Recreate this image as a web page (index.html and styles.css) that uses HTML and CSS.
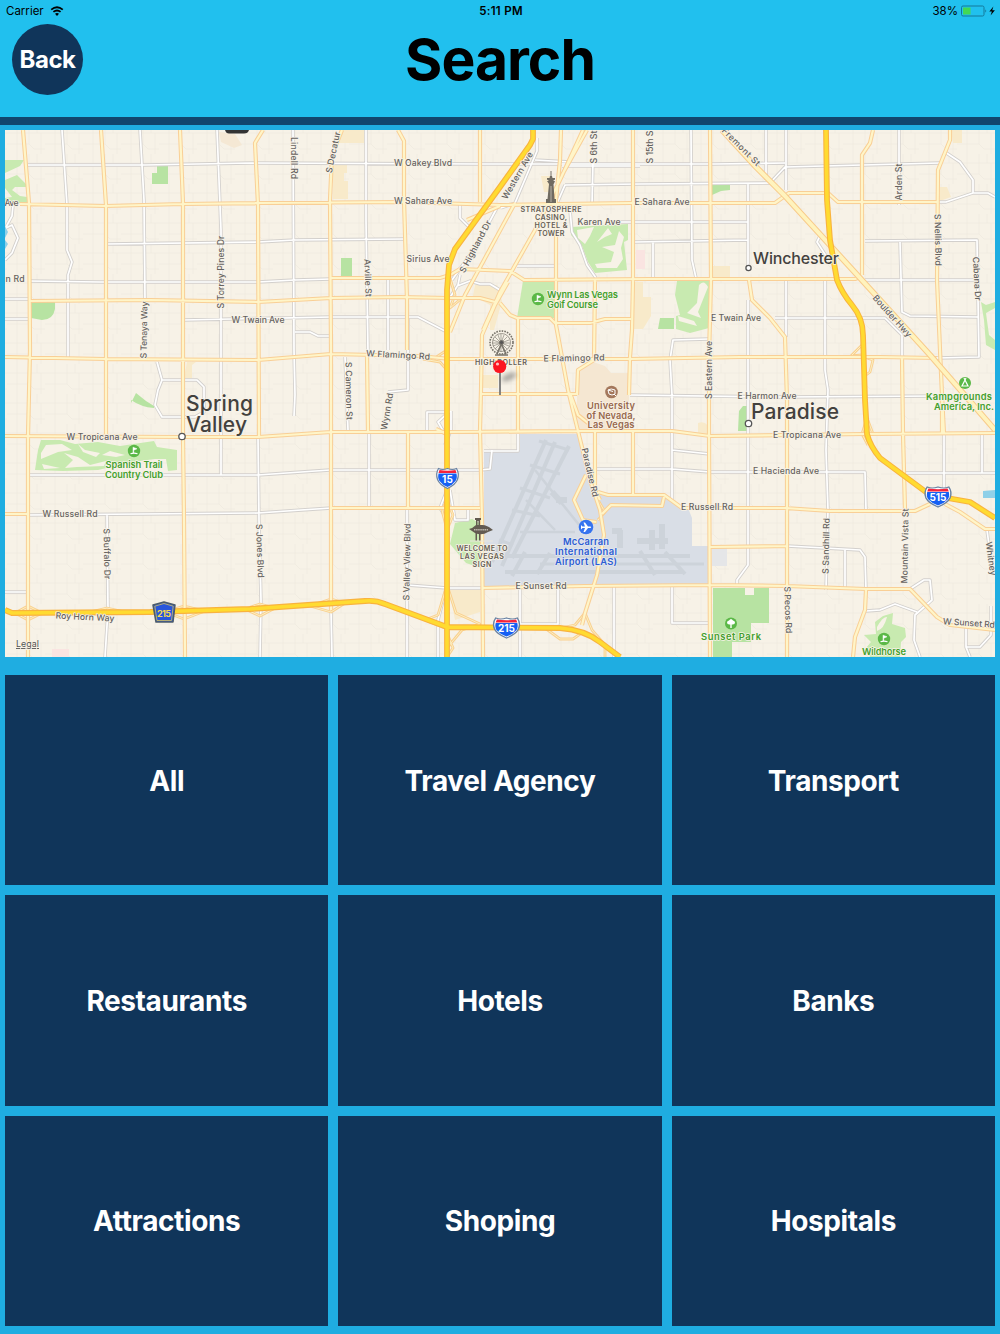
FILE: index.html
```html
<!DOCTYPE html>
<html lang="en">
<head>
  <meta charset="UTF-8">
  <meta name="viewport" content="width=device-width, initial-scale=1.0">
  <title>Search</title>
  <link rel="stylesheet" href="styles.css">
</head>
<body>
  <header>
    <div class="status-bar">
      <div class="carrier">
        <span>Carrier</span>
        <svg class="wifi" viewBox="0 0 14 10">
          <path d="M1.2 3.6Q7-1.2 12.8 3.6M3.4 5.9Q7 3 10.6 5.9" fill="none" stroke="#000" stroke-width="1.8"/>
          <path d="M5 7.7Q7 6.1 9 7.7L7 9.9Z"/>
        </svg>
      </div>
      <div class="time">5:11 PM</div>
      <div class="battery">
        <span>38%</span>
        <svg viewBox="0 0 35 12">
          <rect x=".5" y="1" width="22.5" height="10" rx="1.5" fill="none" stroke="#14789a"/>
          <rect x="2" y="2.5" width="7.5" height="7" fill="#43d853"/>
          <path d="M24.5 4.3Q26 6 24.5 7.7Z" fill="#14566f"/>
          <path d="M32.4 1.6L28.3 6.6H30.9L29.6 10.4L33.9 5.2H31.2Z"/>
        </svg>
      </div>
    </div>
    <div class="title-bar">
      <button class="back-btn">Back</button>
      <h1>Search</h1>
    </div>
  </header>

  <main>
    <svg class="map" viewBox="5 130 990 527">
      <defs>
        <path id="minor" d="M62 130L67 205V250L72 262L68 275V357 M140 130L144 200L145 300 M217 130L221 230V475 M293 130L294 350L295 395L294 416 M366 130V220L368 352
          M28 165H145L250 163L480 164L715 164L785 163 M106 244L258 242L295 240L405 239 M28 281L100 282H258L295 280L331 279 M5 299H30 M5 319H30 M183 320L331 317H418L445 331
          M388 277V350 M408 318V390L388 392 M295 332H310L318 336H331 M5 260L12 253L18 238L12 225L6 228 M13 205L12 216L6 227
          M535 160L570 162 M537 138V151L515 203L501 208 M562 166L640 166 M565 185L640 184L770 183L785 167L940 163 M565 185L555 208 M593 160L592 205 M691 130L692 260L696 278 M653 241V280
          M610 222H748 M635 242L748 240 M748 184V270 M766 130V180 M786 130V190 M899 130V205 M945 152L960 162L973 180V193 M937 202H946L973 193H988L995 197
          M865 241L977 240L979 357L937 358 M900 242L902 312L910 316L978 317 M865 280H978 M775 318H885L902 335V357 M786 280V337 M825 280V370L828 390L826 450L828 510L826 590 M830 262L817 242L820 236
          M709 339L673 340L670 360L672 395V500 M630 395L780 397L940 396 M28 475H258L330 470H480L490 469L492 450 M596 469H672L710 472H865L866 510 M672 450L710 454
          M748 300V565L737 580V586 M407 585L447 588H482 M157 362L162 380H197L204 387V412L195 417H162L155 405L158 390L162 380 M107 515L108 610L105 657 M345 357L348 430
          M28 515L258 513L331 508 M258 437L259 520L261 600L260 657 M331 610L332 657 M407 508V657 M369 432V508 M5 592H28 M787 546L825 548L860 550L865 557L866 590 M845 550V588
          M570 210L572 232L580 245L587 265L596 278 M517 266H556 M460 204V218L468 226 M457 286L470 281L480 284H490L500 290 M460 275L458 285L447 302 M498 206L477 245L452 280
          M520 588V657 M558 588V624H520 M614 586V657 M672 586V623H710 M910 589L924 580H930L932 600L915 615L914 640L920 657 M866 611L880 610L895 604L917 612
          M944 434V490 M902 473H995 M982 434V473 M966 626V647L970 657 M966 647H980L991 635V606 M987 530L991 560 M447 545V588 M427 432V412H445 M484 451H518V434
          M445 434L438 422L450 411 M447 490L440 508L450 524 M450 490L455 520L468 520V510 M438 657V620L447 585 M451 411V430L445 445"/>
        <path id="major" d="M23 130L29 203L30 350L28 436V657 M101 130L106 205V434 M180 130L183 203V436L184 520L185 657 M263 130L255 143L258 205L259 437 M342 130L332 155L330 200L331 350V610
          M398 130L404 141V200L407 300V350 M367 355L368 432 M408 432V508 M480 130V202 M583 130L560 180L535 230L500 292L483 330 M587 130L562 175 M515 203L465 295L450 332
          M561 130L560 160L556 200V325L568 390L578 431 M633 130V280L632 330L630 357L629 395 M710 130L711 280L709 357V430L710 657 M873 130L870 143L862 155V275 M950 130V140L938 170L937 280L940 350L942 395L944 434
          M20 204L105 206L183 204L259 203L400 202L500 205L560 204L630 203H775L789 193H828L838 202H937
          M30 301L150 300L258 302L331 298L400 297L450 298H480L495 302 M331 278H440L450 275L460 269L510 271L524 280L650 279H855L860 277
          M5 357L105 359L258 360L331 354L420 356L450 359H630L740 357H880L937 358
          M500 303L510 315L517 318H550L555 323H590L605 319H631 M595 280L594 360L578 370L577 395 M518 318V432 M482 394H577
          M5 436L183 437H258L331 432H447L578 431H672L710 436L865 434L995 433 M5 514H28 M331 508H480
          M598 492L608 495H664L682 508H785L830 511H915L930 504 M602 514L611 505L662 506L664 497 M710 547L787 546 M482 588L585 586L710 585L787 586L866 589H910L937 617L950 625L995 630
          M578 431L590 480L600 510L604 535L597 575L585 613L582 625 M595 431V490L600 500 M633 431V494 M586 475L574 500L583 520L596 522 M570 393L578 415L588 423
          M749 280L752 300L770 318L785 337L787 400V657 M866 590L865 610L855 637L853 657 M902 357L903 434L905 510 M945 504L960 512L985 529H995 M942 394V434
          M447 434L436 429 M508 282L495 305L482 335L481 390L480 430L482 520L483 657 M467 220L500 206"/>
        <path id="ramps" d="M90 612L107 608L125 612M15 613L28 606L42 613L28 620ZM165 612L184 606L205 611L184 619ZM245 609L260 604L275 608L260 616ZM310 606L331 599L345 603L331 612Z
          M447 585L438 615L425 620L445 628L453 648L447 657M447 585L456 613L480 624L462 630L447 648M447 500L442 510L447 530M447 500L453 515L447 530
          M585 613L575 625L560 628M585 613L592 630L605 645V657M545 628L560 639H573L583 632M865 342L851 356L862 355M867 358L873 360L870 372L866 375M862 434L867 418L873 434L862 434L868 445
          M449 275L455 295L450 308L462 298M447 350L435 358L423 355M447 370L440 362L423 359M598 500L605 512L598 520M583 521L597 522"/>
        <path id="freeway" d="M533 130V139L530 145L500 187L455 249L449 265L447 290V657 M826 130L827 200L830 240L837 280Q842 293 852 305Q863 318 863 335L865 400L867 434Q870 446 880 458L930 495L970 502L995 518
          M5 610L12 613L150 612L250 609L365 601Q376 600 385 604L447 627L560 628Q585 630 600 642L620 657"/>
        <path id="boulder" d="M722 130L755 166L785 196L860 278L930 355L995 430"/>
        <pattern id="blocks" width="38" height="30" patternUnits="userSpaceOnUse" patternTransform="translate(7 4)">
          <path d="M0 9H38M0 20H22L27 25H38M10 0V30M22 0V20M30 0V9M34 9V30" fill="none" stroke="#f0ebdf" stroke-width=".8"/>
        </pattern>
        <g id="interstate">
          <path d="M-9-9Q-5-7 0-9Q5-7 9-9Q12-4 10 2Q8 7 0 11Q-8 7-10 2Q-12-4-9-9Z" fill="#fff" stroke="#6882a3" stroke-width="1.2"/>
          <path d="M-9-4H9Q10 1 8 3.500Q5 7.500 0 9.500Q-5 7.500-8 3.500Q-10 1-9-4Z" fill="#1560f4"/>
          <path d="M-8-7.500Q0-6 8-7.500L9-4.500H-9Z" fill="#f4243c"/>
        </g>
        <g id="flag">
          <circle r="6.200" fill="#5bb847"/>
          <path d="M-1 -3.800L3 -2.200L-.3 -.8V2H-1Z" fill="#fff" stroke="#fff" stroke-width=".5"/>
          <path d="M-3.500 2.800Q0 1.300 3.500 2.800" fill="none" stroke="#fff" stroke-width="1.200"/>
        </g>
      </defs>

      <rect x="5" y="130" width="990" height="527" fill="#f7f2e7"/>
      <rect x="5" y="130" width="990" height="527" fill="url(#blocks)"/>

      <!-- districts -->
      <g fill="#f8eaca">
        <path d="M340 130H364V143H335ZM333 165H347V173H344V181H348V199H333ZM187 362H196L192 365V378H184ZM475 285H497L502 301L494 330H490V305L473 296ZM482 375H498V388H482ZM634 282H643V297H651V316L643 329H634ZM712 266H730V278H712ZM951 130H962V143H953ZM940 187H947L951 197L940 201ZM541 176H550V192H544ZM698 423Q708 419 711 434H698ZM449 590H480V612L455 620Z"/>
        <path d="M219 132L235 134L242 145L234 148L221 142Z" fill="#f5e8d4"/>
        <path d="M577 370L593 362L605 366L611 373H629V430H577Z" fill="#f5e7d2"/>
      </g>
      <path d="M636 250H645V269H636ZM52 649H69V657H52Z" fill="#fae4e1"/>

      <!-- airport -->
      <path d="M492 450H520V434H580L592 480L599 495H664L682 508H688L692 518V546H709V586H484V451Z" fill="#d9dee6"/>
      <path d="M712 548H727V566H712Z" fill="#e5e6e8"/>
      <g fill="none" stroke="#cdd3da">
        <path d="M546 440L492 562M555 442L502 566M569 446L512 558" stroke-width="4"/>
        <path d="M539 441L569 450M530 465L560 474M520 488L550 498M512 510L540 516M499 540L513 545" stroke-width="3"/>
        <path d="M526 500L555 530M520 532H575M535 470L580 526" stroke-width="2.500"/>
        <path d="M552 492L562 503M556 500H567" stroke-width="6"/>
        <path d="M500 556H690M505 572H682M525 552L512 576M550 553L537 574M640 551L655 575M665 552L685 574" stroke-width="4"/>
        <path d="M540 564H704" stroke-width="3"/>
        <path d="M620 530V548M652 530V550M662 524V549M637 541H668M612 531H622" stroke-width="6"/>
      </g>

      <!-- parks and golf -->
      <g fill="#b7e3a2">
        <path d="M157 165H168V184H152V173H157ZM30 302H55V309Q53 320 42 320L31 318ZM341 258H352V277H341ZM712 184H730V190L721 191L712 195ZM660 318H674V329H658ZM131 403L136 393L146 401L154 406V408Q141 407 131 400ZM739 411L743 406H747V431H738ZM713 588H769V623H751V642H732V657H713Z"/>
      </g>
      <rect x="745" y="588" width="9" height="7" fill="#f7f2e7"/>
      <g fill="#c8eab0">
        <path d="M5 160H24L20 166L5 173ZM5 180L17 175L26 184L27 187L15 187L12 190L20 196L27 197V203H5V198L12 197L5 188Z"/>
        <path d="M523 281H556V318H517ZM571 227L628 224L628 240L624 242L627 270L606 272L595 273L588 262L582 246L571 235ZM677 281H709V328L690 333L676 329V316L680 315L675 295Z"/>
        <path d="M41 440H60L75 444L98 442L120 446L154 441L157 447L177 450V470L168 471L166 459H155L132 462L98 470L63 471L35 470L38 450Z"/>
        <path d="M450 544L455 523L472 519L481 524V568L466 563Z"/>
        <path d="M875 622L883 616L893 613L892 624L905 628L906 637L901 642L900 657H870L866 648L871 642L864 635L876 634Z"/>
        <path d="M981 302L986 305L995 302V308L986 313L989 335L995 340V350L986 345L984 320Z"/>
      </g>
      <g fill="#f7f2e7">
        <path d="M577 230L594 227L590 236L585 244L578 238ZM597 242L608 228L612 234L605 237ZM619 231L624 237L621 248L623 259L617 268H597L595 264L611 262L614 252L602 247L615 245Z"/>
        <path d="M699 285Q704 279 708 287L702 302L698 312L701 318L687 313L697 303ZM678 316L694 321L697 326L679 321Z"/>
        <path d="M46 445L62 444L72 450L58 452L41 459V453ZM78 444L85 450L100 453L96 457L83 452ZM64 453L78 457L90 465L106 461L104 466L77 467L65 468L73 460ZM110 451L125 455L116 457L102 455ZM42 464L60 468L44 469Z"/>
        <path d="M877 627Q883 616 887 617Q884 629 877 631Z"/>
      </g>
      <path d="M5 226L8 232L5 238ZM5 240L8 244L5 249ZM983 491L995 490V498H983Z" fill="#8fd0e8"/>

      <!-- roads -->
      <g fill="none" stroke-linejoin="round">
        <use href="#minor" stroke="#d3d0cd" stroke-width="3.400"/>
        <use href="#minor" stroke="#fff" stroke-width="1.700"/>
        <use href="#ramps" stroke="#f9d08f" stroke-width="2.800"/>
        <use href="#ramps" stroke="#fdeec0" stroke-width="1"/>
        <use href="#major" stroke="#f9cf96" stroke-width="4.200"/>
        <use href="#major" stroke="#fff5c8" stroke-width="2.200"/>
        <use href="#boulder" stroke="#f8cb8b" stroke-width="6"/>
        <use href="#boulder" stroke="#fff3bd" stroke-width="4"/>
        <use href="#freeway" stroke="#f9b33e" stroke-width="5.800"/>
        <use href="#freeway" stroke="#ffdb31" stroke-width="3.600"/>
      </g>

      <!-- street names -->
      <g class="street">
        <text x="423" y="166" textLength="58">W Oakey Blvd</text>
        <text x="423" y="204" textLength="58">W Sahara Ave</text>
        <text x="428" y="262" textLength="43">Sirius Ave</text>
        <text x="258" y="323" textLength="53">W Twain Ave</text>
        <text x="398" y="358" textLength="64" transform="rotate(3 398 355)">W Flamingo Rd</text>
        <text x="599" y="225" textLength="43">Karen Ave</text>
        <text x="662" y="205" textLength="55">E Sahara Ave</text>
        <text x="574" y="361" textLength="61" transform="rotate(-1 574 358)">E Flamingo Rd</text>
        <text x="736" y="321" textLength="50">E Twain Ave</text>
        <text x="767" y="399" textLength="59">E Harmon Ave</text>
        <text x="807" y="438" textLength="68">E Tropicana Ave</text>
        <text x="786" y="474" textLength="66">E Hacienda Ave</text>
        <text x="707" y="510" textLength="52">E Russell Rd</text>
        <text x="541" y="589" textLength="51">E Sunset Rd</text>
        <text x="102" y="440" textLength="71">W Tropicana Ave</text>
        <text x="70" y="517" textLength="55">W Russell Rd</text>
        <text x="85" y="620" textLength="59" transform="rotate(3 85 617)">Roy Horn Way</text>
        <text x="969" y="626" textLength="52" transform="rotate(4 969 623)">W Sunset Rd</text>
        <text x="11.500" y="206" textLength="14">Ave</text>
        <text x="15" y="282" textLength="19">n Rd</text>
        <text transform="translate(291 158) rotate(90)" textLength="42">Lindell Rd</text>
        <text transform="translate(336 153) rotate(-78)" textLength="42">S Decatur</text>
        <text transform="translate(365 278) rotate(88)" textLength="38">Arville St</text>
        <text transform="translate(224 272) rotate(-90)" textLength="73">S Torrey Pines Dr</text>
        <text transform="translate(147 330) rotate(-89)" textLength="57">S Tenaya Way</text>
        <text transform="translate(346 391) rotate(89)" textLength="58">S Cameron St</text>
        <text transform="translate(390 412) rotate(-80)" textLength="37">Wynn Rd</text>
        <text transform="translate(520 177) rotate(-60)" textLength="53">Western Ave</text>
        <text transform="translate(478 248) rotate(-62)" textLength="58">S Highland Dr</text>
        <text transform="translate(597 147) rotate(-90)" textLength="33">S 6th St</text>
        <text transform="translate(653 147) rotate(-90)" textLength="33">S 15th S</text>
        <text transform="translate(739 149) rotate(45)" textLength="50">Fremont St</text>
        <text transform="translate(902 182) rotate(-90)" textLength="37">Arden St</text>
        <text transform="translate(935 240) rotate(89)" textLength="52">S Nellis Blvd</text>
        <text transform="translate(974 279) rotate(87)" textLength="44">Cabana Dr</text>
        <text transform="translate(890 318) rotate(48)" textLength="53">Boulder Hwy</text>
        <text transform="translate(712 370) rotate(-90)" textLength="58">S Eastern Ave</text>
        <text transform="translate(587 473) rotate(77)" textLength="50">Paradise Rd</text>
        <text transform="translate(104 554) rotate(89)" textLength="51">S Buffalo Dr</text>
        <text transform="translate(257 551) rotate(88)" textLength="54">S Jones Blvd</text>
        <text transform="translate(410 562) rotate(-89)" textLength="77">S Valley View Blvd</text>
        <text transform="translate(829 546) rotate(-89)" textLength="56">S Sandhill Rd</text>
        <text transform="translate(908 546) rotate(-89)" textLength="75">Mountain Vista St</text>
        <text transform="translate(785 610) rotate(88)" textLength="47">S Pecos Rd</text>
        <text transform="translate(988 559) rotate(82)" textLength="34">Whitney</text>
      </g>

      <!-- towns -->
      <g fill="#fff" stroke="#555" stroke-width="1.300">
        <circle cx="182" cy="436.500" r="3.200"/>
        <circle cx="748.500" cy="268" r="2.600"/>
        <circle cx="748.500" cy="423.500" r="3.200"/>
      </g>
      <g class="town">
        <text x="186" y="411" textLength="67">Spring</text>
        <text x="186" y="432" textLength="61">Valley</text>
        <text x="751" y="419" textLength="88">Paradise</text>
        <text x="753" y="264" textLength="86" class="small">Winchester</text>
      </g>

      <!-- places -->
      <use href="#flag" x="538" y="299"/>
      <use href="#flag" x="134" y="451"/>
      <use href="#flag" x="884" y="639"/>
      <g class="place green">
        <text x="547" y="298" text-anchor="start" textLength="71">Wynn Las Vegas</text>
        <text x="547" y="308" text-anchor="start" textLength="51">Golf Course</text>
        <text x="134" y="468" textLength="57">Spanish Trail</text>
        <text x="134" y="478" textLength="58">Country Club</text>
        <text x="731" y="640" textLength="60">Sunset Park</text>
        <text x="884" y="655" textLength="44">Wildhorse</text>
        <text x="959" y="400" textLength="66">Kampgrounds</text>
        <text x="964" y="410" textLength="60">America, Inc.</text>
      </g>
      <circle cx="731" cy="623.500" r="6" fill="#5bb847"/>
      <path d="M730.300 628V624.500Q727 625 727 622.500Q727 621 729 620.500Q731 617.500 733 620.500Q735 621 735 622.500Q735 625 731.700 624.500V628Z" fill="#fff"/>
      <circle cx="965" cy="383" r="6" fill="#5bb847"/>
      <path d="M965 380L962 386H968ZM964 378L965 380L966 378" fill="none" stroke="#fff" stroke-width="1.200"/>
      <circle cx="611.500" cy="392" r="6.300" fill="#a4785c"/>
      <path d="M608 390Q611 388 615 390V394Q612 396 609 394ZM608 390L613 391.500M614 394L616 396" fill="none" stroke="#fff" stroke-width="1"/>
      <g class="place brown">
        <text x="611" y="409" textLength="48">University</text>
        <text x="611" y="419" textLength="49">of Nevada,</text>
        <text x="611" y="428" textLength="47">Las Vegas</text>
      </g>
      <circle cx="586" cy="527" r="7.300" fill="#3573ef"/>
      <path d="M581 525L582.500 526.500H585L583.500 522.500H585L588 526.500H590.500Q592 527.200 590.500 528H588L585 532H583.500L585 528H582.500L581 529.500Z" fill="#fff"/>
      <g class="place blue">
        <text x="586" y="545" textLength="46">McCarran</text>
        <text x="586" y="555" textLength="62">International</text>
        <text x="586" y="565" textLength="62">Airport (LAS)</text>
      </g>
      <g class="landmark">
        <text x="551" y="212" textLength="61">STRATOSPHERE</text>
        <text x="551" y="220" textLength="32">CASINO,</text>
        <text x="551" y="228" textLength="33">HOTEL &amp;</text>
        <text x="551" y="235.500" textLength="27">TOWER</text>
        <text x="482" y="551" textLength="51">WELCOME TO</text>
        <text x="482" y="559" textLength="44">LAS VEGAS</text>
        <text x="482" y="566.500" textLength="19">SIGN</text>
        <text x="501" y="365" textLength="52">HIGH ROLLER</text>
      </g>
      <path d="M551 171V177" stroke="#77736a" stroke-width="1"/>
      <path d="M550 176H552L552.500 178H555V179.500L553 181H555L554 183.500L553.500 184L554.500 199H556V203H546V199H547.500L549 184L547 181H549L547 179.500V178H549.500Z" fill="#706b61"/>
      <path d="M551 186V202" stroke="#b9b4a9" stroke-width="1"/>
      <g fill="none" stroke="#77736a">
        <circle cx="501.500" cy="342.500" r="11.500" stroke-width="1.600" stroke-dasharray="1.600 1.100"/>
        <circle cx="501.500" cy="342.500" r="9" stroke-width=".7"/>
        <path d="M492 343H510M501 334V352M495 337L507 349M507 337L495 349M498 335L504 351M504 335L498 351M493 340L509 346M493 346L509 340" stroke-width=".6"/>
        <circle cx="501.500" cy="342.500" r="2" fill="#555"/>
        <path d="M501.500 344L497 354M501.500 344L506 354M495 355H508" stroke-width="1.600"/>
      </g>
      <g fill="#625a50">
        <path d="M475 518H481V520H480V525H478.500V521H477.500V525H476V520H475ZM469 529Q473 528 476 525Q484 524 489 527L493 530L488 532Q482 536 475 533Z"/>
        <path d="M475.500 533H477V541H475.500ZM479 533H480.500V541H479Z"/>
        <path d="M474 529.800H488" stroke="#bcb6aa" stroke-width="1.400" stroke-dasharray="1.500 .6"/>
      </g>
      <path d="M470 541H493" stroke="#e9e6dd" stroke-width="1"/>
      <path d="M225 130H249Q248 133.500 244 133.500H229Q226 133.500 225 130Z" fill="#333"/>

      <!-- route shields -->
      <use href="#interstate" x="447.500" y="477.500"/>
      <use href="#interstate" transform="translate(506.500 627) scale(1.200 1)"/>
      <use href="#interstate" transform="translate(938 496) scale(1.200 1)"/>
      <path d="M153 605L164 602L175 605L173 622H156Z" fill="#2856db" stroke="#4d5c68" stroke-width="1.500" stroke-linejoin="round"/>
      <path d="M154.800 606.200L164 603.500L173.200 606.200L171.500 620.500H157Z" fill="none" stroke="#d9c45b" stroke-width=".8"/>
      <g class="shield">
        <text x="447.500" y="483" textLength="11">15</text>
        <text x="506.500" y="632" textLength="17">215</text>
        <text x="938" y="501" textLength="17">515</text>
        <text x="164" y="616.500" textLength="14" class="county">215</text>
      </g>

      <!-- pin -->
      <ellipse class="pin-shadow" cx="509" cy="377" rx="8" ry="3.500" transform="rotate(-25 509 377)"/>
      <path d="M500 371V395" stroke="#777" stroke-width="1.800"/>
      <circle cx="499.700" cy="366.500" r="6.600" fill="#fc1521"/>
      <circle cx="497.500" cy="364" r="1.600" fill="#ffc2c2"/>
      <text class="legal" x="16" y="647" textLength="23">Legal</text>
    </svg>

    <div class="categories">
      <button>All</button>
      <button>Travel Agency</button>
      <button>Transport</button>
      <button>Restaurants</button>
      <button>Hotels</button>
      <button>Banks</button>
      <button>Attractions</button>
      <button>Shoping</button>
      <button>Hospitals</button>
    </div>
  </main>
</body>
</html>
```
FILE: styles.css
```css
/* Global Styles */
* { box-sizing: border-box; }
body {
  font-family: Inter, "Liberation Sans", sans-serif;
  background-color: #1fade1;
  margin: 0;
  height: 1334px;
  display: flex;
  flex-direction: column;
}
button {
  font-family: inherit;
  border: none;
  padding: 0;
  color: #fff;
  background-color: #10355a;
  cursor: pointer;
}
/* Header */
header {
  height: 125px;
  background-color: #21c0ee;
  border-bottom: 8px solid #11466e;
}
.status-bar {
  display: grid;
  grid-template-columns: 1fr auto 1fr;
  align-items: center;
  height: 20px;
  padding: 1px 4px 0 6px;
  font-size: 11.5px;
}
.carrier {
  display: flex;
  align-items: center;
  gap: 6px;
}
.wifi {
  width: 14px;
  height: 10px;
}
.time {
  font-weight: 600;
  letter-spacing: 0.3px;
}
.battery {
  display: flex;
  align-items: center;
  justify-content: flex-end;
  gap: 3px;
}
.battery svg {
  width: 35px;
  height: 12px;
}
.title-bar {
  display: grid;
  grid-template-columns: 72px 1fr 72px;
  align-items: center;
  padding: 3px 12px 0;
}
.back-btn {
  width: 71px;
  height: 71px;
  border-radius: 50%;
  font-size: 24px;
  font-weight: 700;
  letter-spacing: -0.5px;
}
h1 {
  margin: 0;
  padding-top: 1px;
  text-align: center;
  font-size: 57px;
  font-weight: 700;
  line-height: 72px;
  letter-spacing: -1px;
}
/* Map */
main {
  flex: 1;
  display: flex;
  flex-direction: column;
  gap: 18px;
  padding: 5px 5px 8px;
}
.map {
  display: block;
  width: 990px;
  height: 527px;
}
.map text {
  paint-order: stroke;
  stroke: #f7f2e7;
  stroke-width: 1.6px;
  stroke-linejoin: round;
  text-anchor: middle;
}
.street text {
  font-size: 8.7px;
  font-weight: 500;
  fill: #66635f;
}
.map .town text {
  font-size: 21px;
  font-weight: 500;
  fill: #43413e;
  text-anchor: start;
}
.map .town .small { font-size: 16px; }
.place text {
  font-size: 9.4px;
  font-weight: 600;
}
.map text[text-anchor="start"] { text-anchor: start; }
.green { fill: #43a02d; }
.brown { fill: #97684d; }
.blue { fill: #2d5dd3; }
.map .blue text { stroke: #e3e7ee; }
.landmark text {
  font-size: 7.2px;
  font-weight: 600;
  fill: #665e54;
}
.map .shield text {
  font-size: 10px;
  font-weight: 700;
  fill: #fff;
  stroke: none;
}
.map .shield .county {
  fill: #f6d94f;
  font-size: 9px;
}
.map .legal {
  font-size: 9px;
  fill: #555;
  text-anchor: start;
  text-decoration: underline;
}
.pin-shadow {
  fill: #555;
  opacity: 0.45;
  filter: blur(2px);
}
/* Categories */
.categories {
  flex: 1;
  display: grid;
  grid-template-columns: repeat(3, 1fr);
  grid-template-rows: repeat(3, 1fr);
  gap: 10px;
}
.categories button {
  padding-top: 1px;
  font-size: 28px;
  font-weight: 700;
  letter-spacing: -0.4px;
}
```
